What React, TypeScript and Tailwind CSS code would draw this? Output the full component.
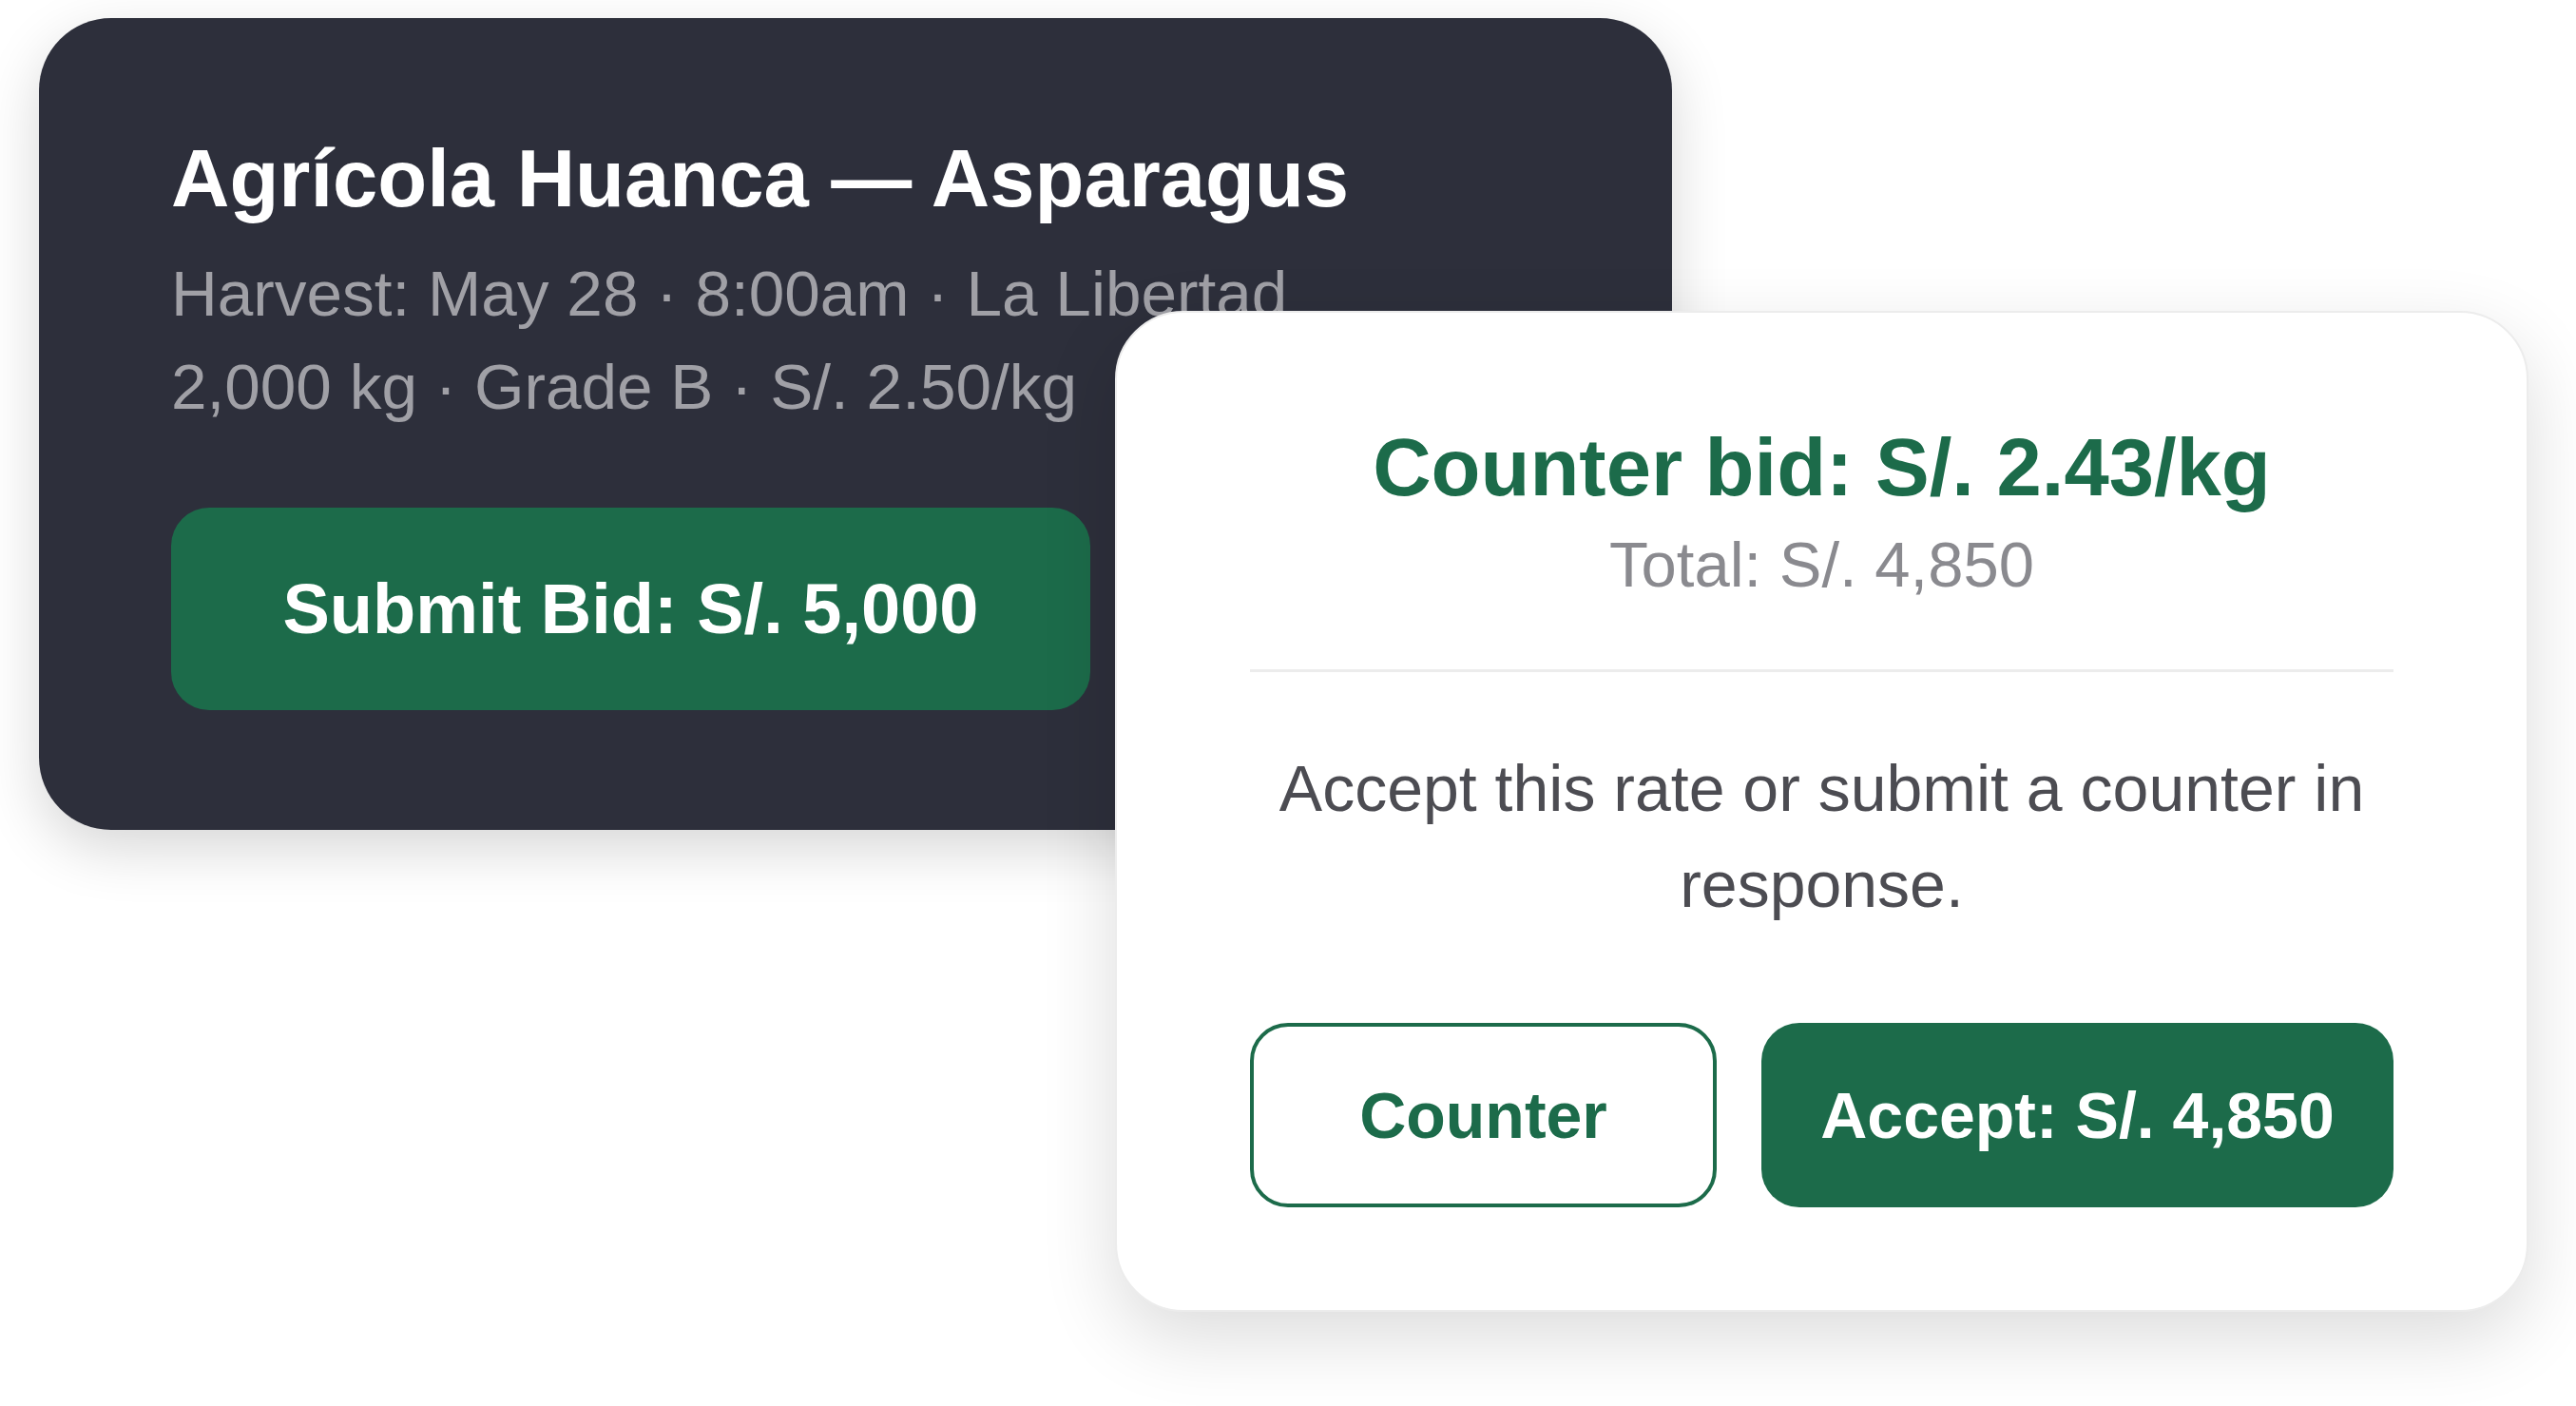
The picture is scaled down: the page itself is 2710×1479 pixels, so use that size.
export default function App() {
  return (
    <div className="relative w-[2710px] h-[1479px] overflow-hidden bg-white font-['Liberation_Sans',Arial,sans-serif]">
      {/* listing card */}
      <div className="ml-[41px] mt-[19px] w-[1718px] rounded-[76px] bg-[#2d2f3b] pl-[139px] pt-[118px] pb-[126px] shadow-[0_20px_60px_rgba(0,0,0,0.16)]">
        <h1 className="text-[85px] leading-[102px] font-bold text-white">Agrícola Huanca — Asparagus</h1>
        <div className="mt-[21px] text-[67.5px] leading-[98px] text-[#a0a0a6]">
          <p>Harvest: May 28 · 8:00am · La Libertad</p>
          <p>2,000 kg · Grade B · S/. 2.50/kg</p>
        </div>
        <button className="mt-[78px] flex h-[213px] w-[967px] items-center justify-center rounded-[40px] bg-[#1c6b4a] text-[74px] font-bold text-white">
          Submit Bid: S/. 5,000
        </button>
      </div>

      {/* counter offer */}
      <div className="absolute left-[1173px] top-[327px] w-[1487px] rounded-[72px] border-2 border-[#ececec] bg-white px-[140px] pt-[112px] pb-[108px] text-center shadow-[0_28px_80px_rgba(0,0,0,0.14)]">
        <h2 className="text-[85px] leading-[102px] font-bold text-[#1c6b4a]">Counter bid: S/. 2.43/kg</h2>
        <p className="mt-px text-[67px] leading-[100px] text-[#8a8a8f]">Total: S/. 4,850</p>
        <div className="mt-[60px] h-[3px] bg-[#ececec]" />
        <p className="mt-[72px] text-[68px] leading-[101px] text-[#4c4c52]">
          Accept this rate or submit a counter in response.
        </p>
        <div className="mt-[95px] flex gap-[47px]">
          <button className="flex h-[194px] w-[491px] items-center justify-center rounded-[40px] border-4 border-[#1c6b4a] bg-white text-[68px] font-bold text-[#1c6b4a]">
            Counter
          </button>
          <button className="flex h-[194px] flex-1 items-center justify-center rounded-[40px] bg-[#1c6b4a] text-[68px] font-bold text-white">
            Accept: S/. 4,850
          </button>
        </div>
      </div>
    </div>
  );
}
